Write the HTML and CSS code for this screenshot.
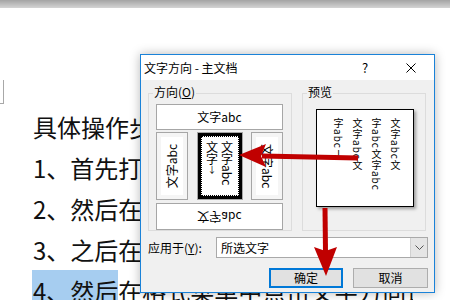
FILE: index.html
```html
<!DOCTYPE html>
<html lang="zh-CN">
<head>
<meta charset="utf-8">
<title>文字方向</title>
<link rel="stylesheet" href="styles.css">
</head>
<body>
<div class="topbar"></div>
<div class="mark"></div>
<div class="doc">
  <p class="line">具体操作步骤如下：</p>
  <p class="line">1、首先打开Word文档，</p>
  <p class="line">2、然后在文档中选中文字，</p>
  <p class="line">3、之后在页面布局中找到，</p>
  <p class="line"><span class="sel">4、然后</span>在格式菜单中点击文字方向选项。</p>
</div>

<div class="dialog">
  <div class="titlebar">
    <span class="title">文字方向 - 主文档</span>
    <span class="tbtn help">?</span>
    <span class="tbtn close">
      <svg width="10" height="10" viewBox="0 0 10 10"><path d="M0.5 0.5 L9.5 9.5 M9.5 0.5 L0.5 9.5" stroke="#000" stroke-width="1" fill="none"/></svg>
    </span>
  </div>
  <div class="body">
    <div class="groups">
      <div class="group dir">
        <span class="glabel">方向(<u>O</u>)</span>
        <div class="hbtn"><span>文字abc</span></div>
        <div class="vrow">
          <div class="vbtn side"><div class="inner"><span class="vtext ccw">文字abc</span></div></div>
          <div class="vbtn mid"><div class="thick"><div class="dots"><span class="vmix">文字abc<br>文字<span class="cur">↓</span></span></div></div></div>
          <div class="vbtn side"><div class="inner"><span class="vtext cw">文字abc</span></div></div>
        </div>
        <div class="hbtn bottom"><span class="flip">文字abc</span></div>
      </div>
      <div class="group prev">
        <span class="glabel">预览</span>
        <div class="pbox">文字abc文<br>字abc文字abc<br>文字abc文<br>字abc<span class="ibeam">I</span></div>
      </div>
    </div>
    <div class="applyrow">
      <span class="alabel">应用于(<u>Y</u>):</span>
      <div class="select">
        <span class="seltext">所选文字</span>
        <span class="selbtn"><svg width="9" height="5" viewBox="0 0 9 5"><path d="M0.5 0.5 L4.5 4.5 L8.5 0.5" stroke="#555" stroke-width="1" fill="none"/></svg></span>
      </div>
    </div>
    <div class="btnrow">
      <div class="btn ok">确定</div>
      <div class="btn">取消</div>
    </div>
  </div>
</div>

<svg class="arrows" width="450" height="300" viewBox="0 0 450 300">
  <path d="M262 153.5 L358 155.5 L358 160.5 L262 158.5 Z" fill="#c00000"/>
  <path d="M239 155 L266 144 L261 156 L266 167 Z" fill="#c00000"/>
  <path d="M322.5 208 L327.5 208 L328 252 L323 252 Z" fill="#c00000"/>
  <path d="M314 247 L325.5 251 L337 247 L326 276 Z" fill="#c00000"/>
</svg>
</body>
</html>
```
FILE: styles.css
```css
* { box-sizing: border-box; margin: 0; padding: 0; }
html, body { width: 450px; height: 300px; overflow: hidden; background: #fff; }
body { font-family: "Noto Sans CJK SC", sans-serif; position: relative; color: #000; }

.topbar { height: 8px; background: linear-gradient(#a4a4a4, #d4d4d4); }
.mark { margin-top: 72px; width: 4px; height: 24px; border-right: 1px solid #a8a8a8; border-bottom: 1px solid #a8a8a8; }

.doc { padding: 2px 0 0 33px; width: 413px; font-size: 24px; line-height: 41px; white-space: nowrap; overflow: hidden; color: #111; }
.line { height: 41px; }
.sel { display: inline-block; background: #a6cdf0; margin-left: -1px; padding-left: 1px; height: 41px; vertical-align: top; }

.dialog { position: absolute; left: 140px; top: 54px; width: 295px; height: 239px; border: 1px solid #1a82d8; background: #f0f0f0; box-shadow: 0 0 10px rgba(0,0,0,0.28); display: flex; flex-direction: column; font-size: 12px; }
.titlebar { height: 25px; background: #fff; display: flex; align-items: center; }
.title { padding-left: 3px; font-size: 12px; line-height: 25px; flex: 1; }
.tbtn { width: 46px; height: 25px; display: flex; align-items: center; justify-content: center; font-size: 13px; }
.close svg { display: block; }

.body { flex: 1; padding: 13px 6px 0 7px; display: flex; flex-direction: column; }
.groups { display: flex; gap: 10px; padding-right: 2px; }
.group { position: relative; border: 1px solid #dcdcdc; height: 138px; }
.glabel { position: absolute; top: -9px; left: 4px; padding: 0 1px; background: #f0f0f0; font-size: 12px; line-height: 14px; }
.dir { width: 144px; padding: 10px 8px 0 7px; display: flex; flex-direction: column; }
.prev { width: 124px; padding: 15px 0 0 13px; }

.hbtn { height: 26px; border: 1px solid #a6a6a6; background: #fff; display: flex; align-items: center; justify-content: center; line-height: 14px; }
.hbtn.bottom { height: 27px; margin-top: 3px; }
.flip { display: inline-block; transform: scaleY(-1); }
.vrow { height: 68px; margin-top: 2px; display: flex; justify-content: space-between; }
.vbtn { border: 1px solid #a6a6a6; background: #fff; }
.side { width: 32px; padding: 4px; background: #f5f5f5; }
.side .inner { height: 100%; background: #fff; display: flex; align-items: center; justify-content: center; }
.vtext { writing-mode: vertical-rl; text-orientation: sideways; line-height: 14px; font-size: 12px; }
.vtext.ccw { transform: rotate(180deg); }
.mid { width: 46px; }
.thick { height: 100%; border: 3px solid #000; }
.dots { height: 100%; border: 1px dotted #000; display: flex; justify-content: center; padding-top: 4px; }
.vmix { writing-mode: vertical-rl; line-height: 15px; font-size: 12px; }
.cur { text-orientation: upright; font-size: 9px; }

.pbox { width: 98px; height: 98px; border: 1px solid #000; background: #fff; box-shadow: 2px 2px 3px rgba(0,0,0,0.35); writing-mode: vertical-rl; padding: 8px 8px 0 0; font-size: 10px; letter-spacing: 1px; line-height: 19px; }
.ibeam { text-orientation: upright; font-size: 9px; }

.applyrow { margin-top: 6px; display: flex; align-items: center; height: 21px; }
.alabel { width: 68px; line-height: 21px; }
.select { flex: 1; height: 21px; border: 1px solid #a9a9a9; background: #fff; display: flex; }
.seltext { flex: 1; padding-left: 4px; line-height: 19px; }
.selbtn { width: 17px; background: #e5e5e5; border-left: 1px solid #d0d0d0; display: flex; align-items: center; justify-content: center; }

.btnrow { margin-top: 10px; display: flex; justify-content: flex-end; gap: 10px; }
.btn { width: 75px; height: 20px; border: 1px solid #adadad; background: #e1e1e1; display: flex; align-items: center; justify-content: center; line-height: 16px; }
.btn.ok { width: 74px; border: 2px solid #0078d7; }

.arrows { position: absolute; left: 0; top: 0; }
```
